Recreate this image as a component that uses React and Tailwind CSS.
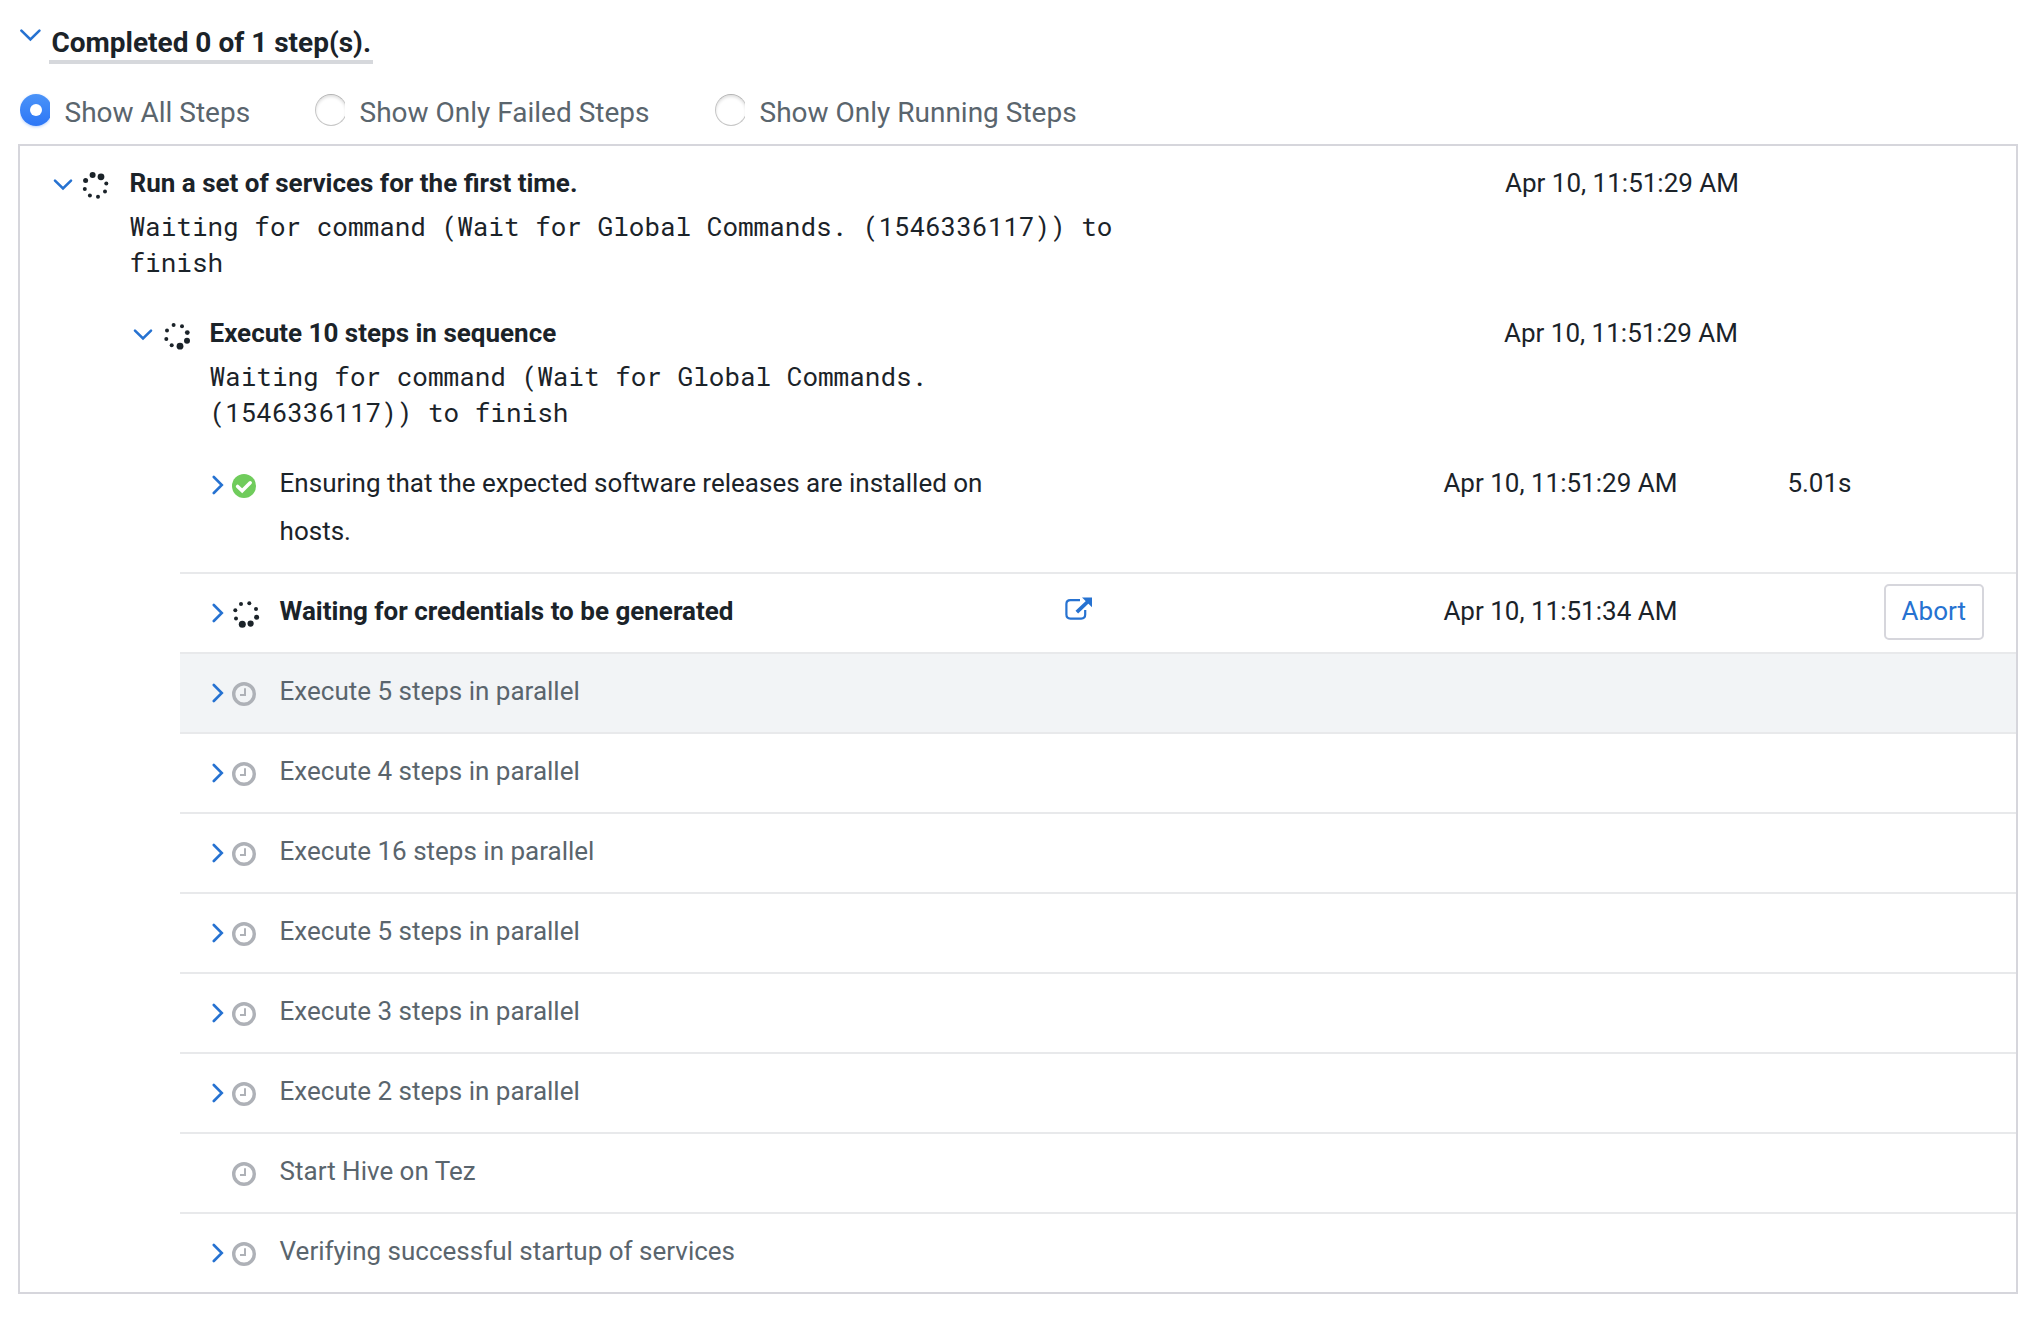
const SANS = "font-['Roboto',sans-serif]";
const MONO = "font-['Roboto_Mono','Liberation_Mono',monospace]";

function Chevron({ dir, className }) {
  if (dir === "none") return <span className={className} />;
  return (
    <svg className={className} width="20" height="20" viewBox="0 0 20 20" fill="none" stroke="#2672d1" strokeWidth="2.6" strokeLinecap="round" strokeLinejoin="miter">
      <path d={dir === "down" ? "M2 5.6 L10 13.4 L18 5.6" : "M1.8 2 L9.8 10 L1.8 18"} />
    </svg>
  );
}

const SPIN = {
  a: [[10.6, 3.0, 3], [19, 4.8, 3.4], [24.3, 11.4, 2], [23, 19.6, 2], [16, 24.8, 2], [7.9, 23.6, 2], [2.8, 17, 2], [3.6, 8.6, 2.5]],
  b: [[10.6, 3, 2], [19, 4.2, 2], [24.3, 10.6, 2.4], [24, 18.8, 3], [17, 24.2, 3.4], [8.7, 23.2, 2], [3.3, 17, 2], [4, 8.6, 2]],
  c: [[9, 4, 2], [17.3, 3.2, 2], [24, 9, 2], [24.6, 17.3, 2.5], [18.6, 23.6, 3.1], [10.3, 24.2, 3.5], [4, 18.6, 2], [3.3, 10.3, 2]],
};

function Spinner({ phase }) {
  return (
    <svg width="28" height="28" viewBox="0 0 28 28" fill="#1b2329">
      {SPIN[phase].map(([x, y, r]) => (
        <circle key={`${x}-${y}`} cx={x} cy={y} r={r} />
      ))}
    </svg>
  );
}

function Check() {
  return (
    <svg width="24" height="24" viewBox="0 0 24 24">
      <circle cx="12" cy="12" r="12" fill="#70cc5c" />
      <path d="M5.6 12.4 L10.2 16.8 L18.2 8.8" fill="none" stroke="#fff" strokeWidth="3.5" strokeLinecap="round" />
    </svg>
  );
}

function Clock() {
  return (
    <svg width="24" height="24" viewBox="0 0 24 24" fill="none" stroke="#aeb1b7">
      <circle cx="12" cy="12" r="10.3" strokeWidth="3.4" />
      <path d="M13 6.2 V13 H8" strokeWidth="2" />
    </svg>
  );
}

function ExternalLink() {
  return (
    <svg width="28" height="24" viewBox="0 0 28 24" fill="none" stroke="#2672d1">
      <path d="M15 3.2 H5.4 Q1.4 3.2 1.4 7 V17.6 Q1.4 21.6 5.4 21.6 H16.2 Q20.2 21.6 20.2 17.6 V13" strokeWidth="2.2" />
      <path d="M11.8 15.2 L23 4.5" strokeWidth="3.8" />
      <path d="M17 0.6 H27 V10.2 Z" fill="#2672d1" stroke="none" />
    </svg>
  );
}

function Radio({ checked, label, className }) {
  return (
    <label className={`flex items-start ${className}`}>
      <span className="mt-[2px] h-8 w-[30px] shrink-0 overflow-x-clip">
        {checked ? (
          <span className="flex size-8 items-center justify-center rounded-full bg-linear-to-b from-[#4b93f8] to-[#2c76f6] shadow-[0_1px_3px_rgba(44,118,246,0.35)]">
            <span className="size-3 rounded-full bg-white" />
          </span>
        ) : (
          <span className="block size-8 rounded-full border border-[#c6c6c6] border-t-[#b4b4b4] bg-white shadow-[inset_0_2px_3px_rgba(0,0,0,0.12)]" />
        )}
      </span>
      <span className="mt-px ml-[14.5px] text-[28px] leading-[40px] text-[#5a656d]">{label}</span>
    </label>
  );
}

const QUEUED = [
  ["Execute 5 steps in parallel", true],
  ["Execute 4 steps in parallel", true],
  ["Execute 16 steps in parallel", true],
  ["Execute 5 steps in parallel", true],
  ["Execute 3 steps in parallel", true],
  ["Execute 2 steps in parallel", true],
  ["Start Hive on Tez", false],
  ["Verifying successful startup of services", true],
];

function StepRow({ chevron, icon, label, bold, muted, link, time, duration, action, className = "" }) {
  return (
    <div className={`grid grid-cols-[32px_19px_48.6px_783.4px_380.4px_344px_1fr] items-start ${className}`}>
      <span />
      <Chevron dir={chevron} className="mt-[29px]" />
      <span className={bold ? "mt-[26px] ml-[1px]" : "mt-[28px] ml-[1px]"}>{icon}</span>
      <span className={`mt-[13px] max-w-[740px] leading-[48px] ${bold ? "font-bold" : ""} ${muted ? "text-[#5a656d]" : ""}`}>{label}</span>
      <span className="mt-[23px] ml-[2px]">{link && <ExternalLink />}</span>
      <span className="mt-[13px] leading-[48px]">{time}</span>
      <span className="flex items-start">
        {duration && <span className="mt-[13px] leading-[48px]">{duration}</span>}
        {action && (
          <button className="mt-[10px] ml-[96.4px] flex h-14 w-[100px] items-center justify-center rounded-[5px] border-2 border-[#d6d6dc] bg-white pb-px text-[#2672d1]">
            {action}
          </button>
        )}
      </span>
    </div>
  );
}

function GroupRow({ cols, phase, title, message, time, iconClass }) {
  return (
    <div className={`grid h-[150px] items-start ${cols}`}>
      <Chevron dir="down" className="mt-[29px]" />
      <span className={iconClass}>
        <Spinner phase={phase} />
      </span>
      <div className="pt-[13px]">
        <div className="font-bold leading-[48px]">{title}</div>
        <div className={`mt-px leading-9 ${MONO}`}>{message}</div>
      </div>
      <span />
      <span className="mt-[13px] leading-[48px]">{time}</span>
    </div>
  );
}

export default function App() {
  return (
    <div className={`h-[1336px] w-[2030px] overflow-hidden bg-white text-[26px] text-[#1b2329] ${SANS}`}>
      <header className="flex items-start pl-5">
        <svg className="mt-[28px]" width="22" height="14" viewBox="0 0 22 14" fill="none" stroke="#2672d1" strokeWidth="2.6" strokeLinecap="round">
          <path d="M1.4 2.6 L10.4 11.4 L19.4 2.6" />
        </svg>
        <h1 className="mt-[24px] ml-[7px] h-10 w-[324px] border-b-4 border-[#d6d8dc] pt-px pl-[2.4px] text-[28px] leading-[36px] font-bold whitespace-nowrap">
          Completed 0 of 1 step(s).
        </h1>
      </header>

      <div className="mt-[28px] flex h-[52px] pl-5">
        <Radio checked label="Show All Steps" className="w-[295px]" />
        <Radio label="Show Only Failed Steps" className="w-[400px]" />
        <Radio label="Show Only Running Steps" className="" />
      </div>

      <section className="ml-[18px] h-[1150px] w-[2000px] border-2 border-[#d6d6dc]">
        <GroupRow
          cols="grid-cols-[20px_56.5px_1000px_375.5px_1fr] pl-[33px]"
          iconClass="mt-[26px] ml-[9px]"
          phase="a"
          title="Run a set of services for the first time."
          message="Waiting for command (Wait for Global Commands. (1546336117)) to finish"
          time="Apr 10, 11:51:29 AM"
        />
        <GroupRow
          cols="grid-cols-[20px_56.5px_799.5px_495px_1fr] pl-[113px]"
          iconClass="mt-[26px] ml-[9.5px]"
          phase="b"
          title="Execute 10 steps in sequence"
          message="Waiting for command (Wait for Global Commands. (1546336117)) to finish"
          time="Apr 10, 11:51:29 AM"
        />
        <div className="ml-[160px]">
          <StepRow
            className="h-[126px]"
            chevron="right"
            icon={<Check />}
            label="Ensuring that the expected software releases are installed on hosts."
            time="Apr 10, 11:51:29 AM"
            duration="5.01s"
          />
          <StepRow
            className="h-20 border-t-2 border-[#e8e9eb]"
            chevron="right"
            icon={<Spinner phase="c" />}
            label="Waiting for credentials to be generated"
            bold
            link
            time="Apr 10, 11:51:34 AM"
            action="Abort"
          />
          {QUEUED.map(([label, expandable], i) => (
            <StepRow
              key={i}
              className={`h-20 border-t-2 border-[#e8e9eb] ${i === 0 ? "bg-[#f2f4f6]" : ""}`}
              chevron={expandable ? "right" : "none"}
              icon={<Clock />}
              label={label}
              muted
            />
          ))}
        </div>
      </section>
    </div>
  );
}
